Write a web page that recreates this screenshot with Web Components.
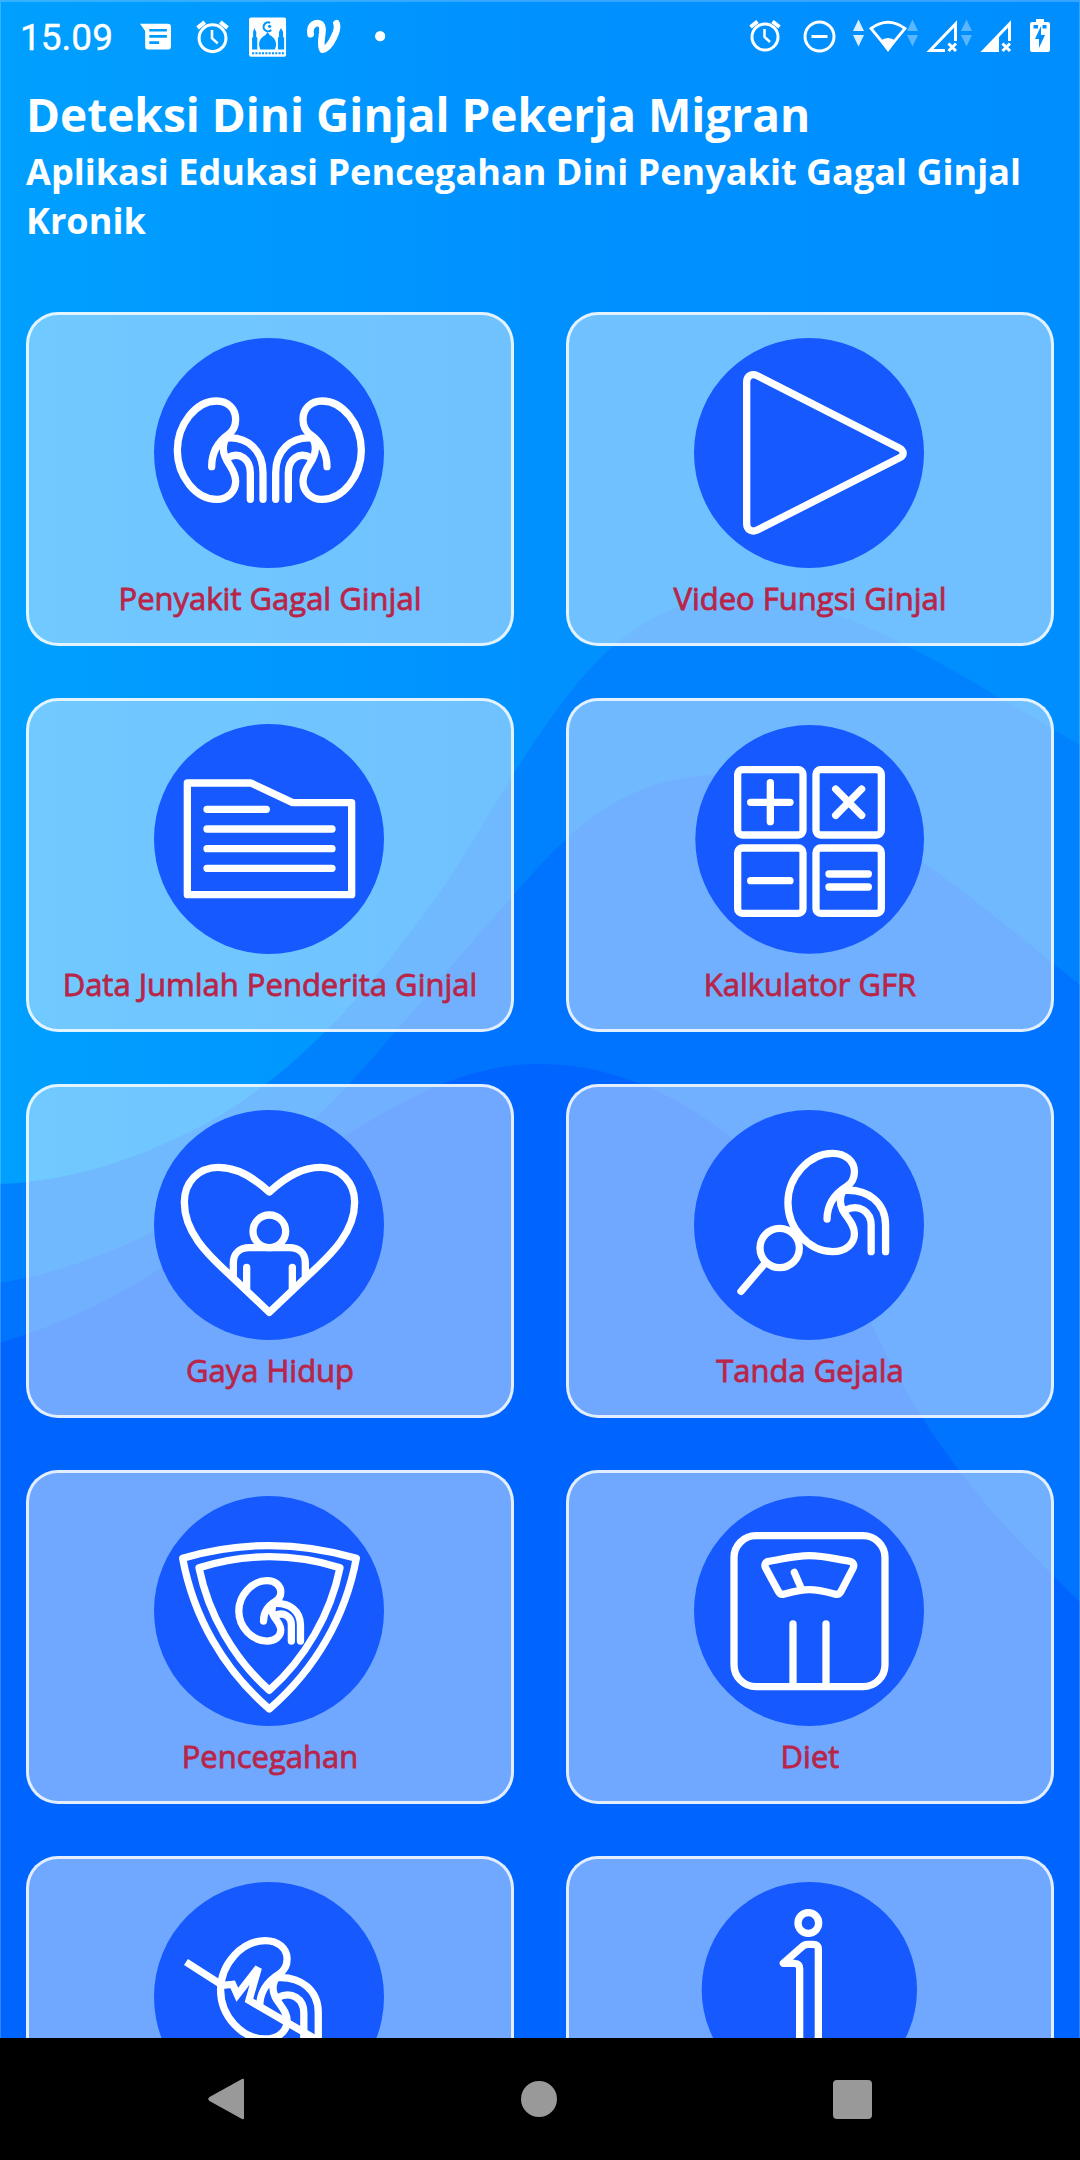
<!DOCTYPE html>
<html lang="id">
<head>
<meta charset="utf-8">
<title>Deteksi Dini Ginjal Pekerja Migran</title>
<style>
    body {
        margin: 0;
        font-family: "Open Sans", "Noto Sans", sans-serif;
    }
</style>
</head>
<body>
<kidney-app>
    <status-bar slot="status" time="15.09"></status-bar>
    <page-header slot="header">
        Deteksi Dini Ginjal Pekerja Migran
        <span slot="subtitle">Aplikasi Edukasi Pencegahan Dini Penyakit Gagal Ginjal Kronik</span>
    </page-header>
    <menu-card icon="kidneys">Penyakit Gagal Ginjal</menu-card>
    <menu-card icon="play">Video Fungsi Ginjal</menu-card>
    <menu-card icon="folder">Data Jumlah Penderita Ginjal</menu-card>
    <menu-card icon="calculator">Kalkulator GFR</menu-card>
    <menu-card icon="lifestyle">Gaya Hidup</menu-card>
    <menu-card icon="symptoms">Tanda Gejala</menu-card>
    <menu-card icon="shield">Pencegahan</menu-card>
    <menu-card icon="scale">Diet</menu-card>
    <menu-card icon="injury"></menu-card>
    <menu-card icon="info"></menu-card>
    <nav-bar slot="nav"></nav-bar>
</kidney-app>

<script>
// One kidney with its vessels, reused by several of the menu icons
const KIDNEY = `
    <path d="M173 386C173 343 193 311 224 289C240 277 245 264 245 244C245 212 221 189 188 189C125 189 70 260 70 337C70 414 125 484 188 484C222 484 245 460 245 430C245 389 208 372 208 332C208 315 212 305 220 296"/>
    <path d="M220 300C282 296 327 338 327 405V484M220 360C258 338 289 365 289 405V484"/>`;

const DISC = '<circle class="disc" cx="345" cy="345" r="345"/>';

// Menu icons, drawn on a 690 x 690 grid
const MENU_ICONS = {
    kidneys: `${DISC}${KIDNEY}<g transform="translate(692 0) scale(-1 1)">${KIDNEY}</g>`,

    play: `${DISC}<path d="M158 132C158 113 174 105 190 113L614 329C632 339 632 352 614 361L190 576C174 584 158 575 158 557Z"/>`,

    folder: `${DISC}
        <path d="M100 177H291L416 236H593V512H100Z"/>
        <path d="M159 256H337M159 315H534M159 374H534M159 433H534"/>`,

    calculator: `<circle class="disc" cx="347" cy="346" r="343"/>
        <rect x="131" y="137" width="196" height="196" rx="14"/>
        <rect x="366" y="137" width="196" height="196" rx="14"/>
        <rect x="131" y="372" width="196" height="196" rx="14"/>
        <rect x="366" y="372" width="196" height="196" rx="14"/>
        <path d="M229 176V293M170 235H288M425 195L503 274M503 195L425 274M170 470H288M405 450H523M405 489H523"/>`,

    lifestyle: `${DISC}
        <path d="M346 246C295 199 248 172 193 172C133 172 91 217 91 277C91 365 157 431 228 495L346 607L464 495C535 431 602 365 602 277C602 217 559 172 499 172C444 172 397 199 346 246Z"/>
        <circle cx="346" cy="364" r="49"/>
        <path d="M238 495V459C238 429 258 413 286 413H406C434 413 454 429 454 459V495M278 472V535M415 472V535"/>`,

    symptoms: `${DISC}<g transform="translate(202 -59) scale(1.14 1)">${KIDNEY}</g>
        <circle cx="257" cy="414" r="59"/>
        <path d="M213 460L141 544"/>`,

    shield: `${DISC}
        <path d="M86 187C255 136 437 136 607 187C574 363 484 520 346 639C208 520 119 363 86 187Z"/>
        <path d="M135 215C273 172 420 172 558 215C530 354 453 488 346 583C239 488 163 354 135 215Z"/>
        <g transform="translate(204 138) scale(.72 .614)">${KIDNEY}</g>`,

    scale: `${DISC}
        <rect x="120" y="119" width="453" height="453" rx="66"/>
        <path d="M224 196C263 190 301 179 346 179C391 179 428 190 468 196C478 198 482 208 477 217L441 286C437 293 431 297 422 294C395 287 372 281 346 281C320 281 298 287 271 294C262 297 257 293 253 286L215 216C210 207 214 198 224 196ZM323 280L301 229M297 384V570M396 384V570"/>`,

    injury: `${DISC}<g transform="translate(120 -13) scale(1.14 1)">${KIDNEY}</g>
        <path class="sharp" d="M96 240L205 310L236 307L250 338L313 257L285 355L500 480"/>`,

    info: `<circle class="disc" cx="346" cy="323" r="323"/>
        <circle cx="343" cy="123" r="31"/>
        <path d="M373 520V202C373 191 367 187 357 187H341C331 187 325 192 319 199L268 244H302C312 244 317 250 317 260V520"/>`
};

class MenuCard extends HTMLElement {
    constructor() {
        super();
        this.attachShadow({ mode: 'open' });
        this.shadowRoot.innerHTML = `
            <style>
                :host {
                    display: flex;
                    flex-direction: column;
                    align-items: center;
                    box-sizing: border-box;
                    height: 334px;
                    padding: 23px 0 0;
                    border: 3px solid rgba(255, 255, 255, .8);
                    border-radius: 32px;
                    background: rgba(255, 255, 255, .44);
                }
                svg {
                    width: 230px;
                    height: 230px;
                    margin-right: 2px;
                    fill: none;
                    stroke: #fff;
                    stroke-width: 7.3px;
                    stroke-linecap: round;
                    stroke-linejoin: round;
                }
                svg * { vector-effect: non-scaling-stroke; }
                .disc { fill: #1559ff; stroke: none; }
                .sharp { stroke-linejoin: miter; stroke-linecap: butt; }
                .label {
                    margin-top: 8px;
                    color: #b92548;
                    font-size: 31px;
                    line-height: 44px;
                    white-space: nowrap;
                    -webkit-text-stroke: .8px #b92548;
                }
            </style>
            <svg viewBox="0 0 690 690">${MENU_ICONS[this.getAttribute('icon')]}</svg>
            <div class="label"><slot></slot></div>
        `;
    }
}

class PageHeader extends HTMLElement {
    constructor() {
        super();
        this.attachShadow({ mode: 'open' });
        this.shadowRoot.innerHTML = `
            <style>
                :host {
                    display: block;
                    box-sizing: border-box;
                    height: 240px;
                    padding: 11px 26px 0;
                    color: #fff;
                    font-weight: 700;
                }
                h1 { margin: 0 0 1px; font-size: 46px; line-height: 63px; white-space: nowrap; }
                p { margin: 0; font-size: 36.08px; line-height: 49px; }
            </style>
            <h1><slot></slot></h1>
            <p><slot name="subtitle"></slot></p>
        `;
    }
}

const ALARM = `
    <g fill="none" stroke="#fff" stroke-width="3">
        <circle cx="16" cy="37" r="13"/>
        <path d="M15.500 29V37L21 42" stroke-width="2.500"/>
        <path d="M1.500 27L8.500 21.500M23.500 21.500L30.500 27" stroke-width="4"/>
    </g>`;

const ARROWS = '<path fill="#fff" d="M5.500 19.500L11 31H0ZM0 35H11L5.500 46.500Z"/>';

// Status icons: width, and shapes on a strip 72 high
const STATUS_ICONS = {
    message: [30, '<path fill="#fff" fill-rule="evenodd" d="M0 23H27Q30 23 30 26V45Q30 48 27 48H8Q5 48 5 45V30ZM9 28V30.500H26V28ZM9 34V36.500H26V34ZM9 40V42.500H18.500V40Z"/>'],
    alarm: [32, ALARM],
    mosque: [36, `
        <rect y="17" width="36" height="38" rx="2" fill="#fff"/>
        <path fill="#0095ff" d="M18 31L20 34C25 37 28 41 25 48H11C8 41 11 37 16 34ZM5 27L7 31V36H8V48H3V36H4V31ZM31 27L33 31V36H34V48H28V36H29V31Z"/>
        <path fill="none" stroke="#0095ff" stroke-width="2" d="M20.500 22.200A4.300 4.300 0 1 0 21.500 29"/>
        <circle cx="20" cy="25.500" r="1.500" fill="#0095ff"/>
        <path fill="none" stroke="#0095ff" stroke-width="2" stroke-dasharray="2 1.200" d="M3 51.500H34"/>`],
    v: [34, '<path fill="none" stroke="#fff" stroke-width="6.500" stroke-linecap="round" stroke-linejoin="round" d="M3.500 33C2 24 9 20.500 13.500 23.500C18 28 11 42 15 48C21 47 24 40 26 36C29 30 30 26 28.500 22.500"/>'],
    dot: [10, '<circle cx="5" cy="35" r="5" fill="#fff"/>'],
    dnd: [33, '<g fill="none" stroke="#fff" stroke-width="3"><circle cx="16.500" cy="36.500" r="14.500"/><path d="M8.500 36.500H24.500"/></g>'],
    arrows: [11, `<g opacity=".85">${ARROWS}</g>`],
    'arrows-dim': [11, `<g opacity=".35">${ARROWS}</g>`],
    wifi: [38, '<path fill="none" stroke="#fff" stroke-width="2.800" d="M2 28.500Q19 16 36 28.500L19 49Z"/><path fill="#fff" d="M11 41Q19 35 27 41L19 52Z"/>'],
    signal: [32, '<path fill="none" stroke="#fff" stroke-width="3" d="M19 50.500H4L29.500 24V41M22.500 43.500L30 51M30 43.500L22.500 51"/>'],
    'signal-half': [32, '<path fill="none" stroke="#fff" stroke-width="3" d="M16 50.500H4L29.500 24V41M22.500 43.500L30 51M30 43.500L22.500 51"/><path fill="#fff" d="M2 52L19 35V52Z"/>'],
    battery: [20, '<path fill="#fff" fill-rule="evenodd" d="M6 19H14V22H18Q20 22 20 24V50Q20 52 18 52H2Q0 52 0 50V24Q0 22 2 22H6ZM3.500 25V28.500H8V25ZM12.500 25V28.500H16.500V25ZM11 26L5 39H9V48L15 35H11Z"/>']
};

class StatusIcon extends HTMLElement {
    constructor() {
        super();
        this.attachShadow({ mode: 'open' });
        const [width, shapes] = STATUS_ICONS[this.getAttribute('name')];
        this.shadowRoot.innerHTML = `
            <style>
                :host { display: block; }
                svg { display: block; }
            </style>
            <svg width="${width}" height="72" viewBox="0 0 ${width} 72">${shapes}</svg>
        `;
    }
}

class StatusBar extends HTMLElement {
    constructor() {
        super();
        this.attachShadow({ mode: 'open' });
        this.shadowRoot.innerHTML = `
            <style>
                :host {
                    display: flex;
                    justify-content: space-between;
                    height: 72px;
                    padding: 0 30px 0 20px;
                    color: #fff;
                    font: 400 37px/76px Roboto, sans-serif;
                    -webkit-text-stroke: .4px #fff;
                }
                .group { display: flex; }
                .time { width: 120px; }
                /* notification icons are a little larger than the system ones */
                .notifications status-icon {
                    transform: scale(1.033);
                    transform-origin: 0 0;
                }
            </style>
            <div class="group notifications">
                <div class="time"></div>
                <status-icon name="message"></status-icon>
                <status-icon name="alarm" style="margin-left: 26px"></status-icon>
                <status-icon name="mosque" style="margin-left: 21px"></status-icon>
                <status-icon name="v" style="margin-left: 22px"></status-icon>
                <status-icon name="dot" style="margin-left: 34px"></status-icon>
            </div>
            <div class="group">
                <status-icon name="alarm"></status-icon>
                <status-icon name="dnd" style="margin-left: 22px"></status-icon>
                <status-icon name="arrows" style="margin-left: 17px"></status-icon>
                <status-icon name="wifi" style="margin-left: 5px"></status-icon>
                <status-icon name="arrows-dim"></status-icon>
                <status-icon name="signal" style="margin-left: 8px"></status-icon>
                <status-icon name="arrows-dim" style="margin-left: 3px"></status-icon>
                <status-icon name="signal-half" style="margin-left: 8px"></status-icon>
                <status-icon name="battery" style="margin-left: 18px"></status-icon>
            </div>
        `;
        this.shadowRoot.querySelector('.time').textContent = this.getAttribute('time');
    }
}

class NavBar extends HTMLElement {
    constructor() {
        super();
        this.attachShadow({ mode: 'open' });
        this.shadowRoot.innerHTML = `
            <style>
                :host {
                    display: flex;
                    justify-content: space-between;
                    align-items: center;
                    box-sizing: border-box;
                    height: 122px;
                    padding: 0 208px;
                    background: #000;
                }
                svg { fill: #999; }
            </style>
            <svg width="36" height="42"><path d="M34 1Q36 0 36 2V40Q36 42 34 41L1.500 23Q-1 21 1.500 19Z"/></svg>
            <svg width="36" height="36"><circle cx="18" cy="18" r="18"/></svg>
            <svg width="39" height="39"><rect width="39" height="39" rx="4"/></svg>
        `;
    }
}

class KidneyApp extends HTMLElement {
    constructor() {
        super();
        this.attachShadow({ mode: 'open' });
        this.shadowRoot.innerHTML = `
            <style>
                :host {
                    display: flex;
                    flex-direction: column;
                    width: 1080px;
                    height: 2160px;
                    overflow: hidden;
                }
                main {
                    position: relative;
                    flex: 1;
                    min-height: 0;
                    overflow: hidden;
                    box-sizing: border-box;
                }
                .waves {
                    position: absolute;
                    inset: 0;
                    z-index: -1;
                }
                .grid {
                    display: grid;
                    grid-template-columns: 1fr 1fr;
                    gap: 52px;
                    padding: 0 26px;
                }
            </style>
            <main>
                <svg class="waves" width="1080" height="2038">
                    <defs>
                        <linearGradient id="sky">
                            <stop offset="0" stop-color="#00a0ff"/>
                            <stop offset=".5" stop-color="#0091ff"/>
                            <stop offset="1" stop-color="#008eff"/>
                        </linearGradient>
                    </defs>
                    <rect width="1080" height="2038" fill="url(#sky)"/>
                    <path fill="#0082ff" d="M0 1184C80 1181 150 1153 207 1123C310 1066 390 965 453 873C520 763 570 675 630 633C670 603 710 596 750 597C850 600 960 675 1080 745V2038H0Z"/>
                    <path fill="#0073ff" d="M0 1283C60 1273 110 1253 153 1232C240 1190 300 1137 353 1080C420 1005 455 960 503 907C560 843 610 777 720 775C825 774 950 880 1080 985V2038H0Z"/>
                    <path fill="#0064ff" d="M0 1343C65 1323 110 1300 153 1273C230 1220 280 1178 347 1135C410 1095 470 1064 540 1064C670 1064 800 1165 873 1327C930 1450 1000 1525 1080 1602V2038H0Z"/>
                    <path fill="none" stroke="#fff" stroke-opacity=".2" stroke-width="2" d="M0 2038V1H1080V2038"/>
                </svg>
                <slot name="status"></slot>
                <slot name="header"></slot>
                <div class="grid"><slot></slot></div>
            </main>
            <slot name="nav"></slot>
        `;
    }
}

customElements.define('status-icon', StatusIcon);
customElements.define('status-bar', StatusBar);
customElements.define('page-header', PageHeader);
customElements.define('menu-card', MenuCard);
customElements.define('nav-bar', NavBar);
customElements.define('kidney-app', KidneyApp);
</script>
</body>
</html>
